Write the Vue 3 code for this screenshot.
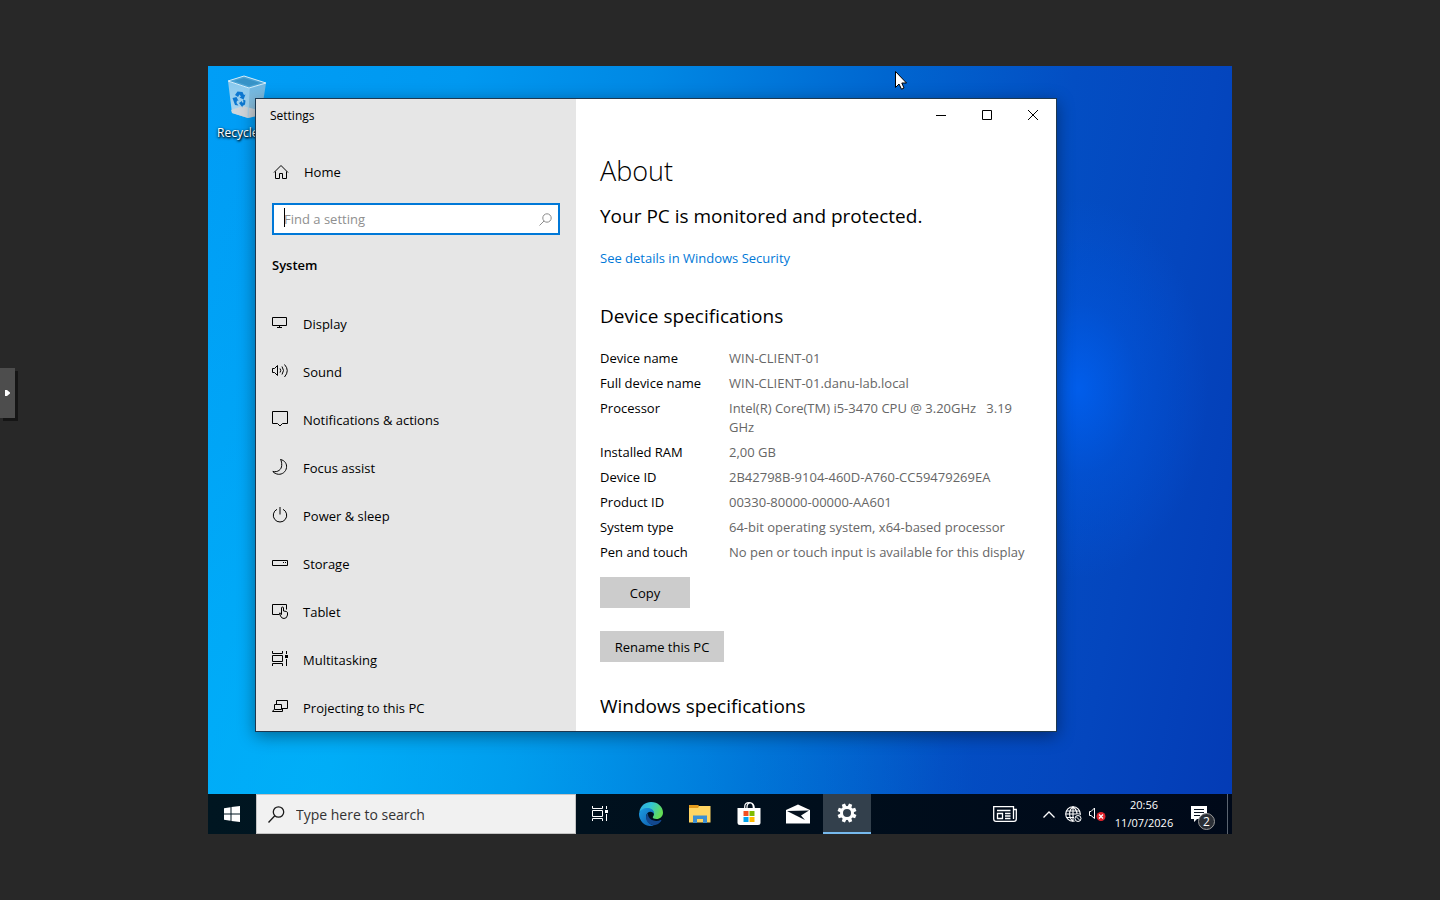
<script setup>
const navItems = [
  { id: 'display', label: 'Display' },
  { id: 'sound', label: 'Sound' },
  { id: 'notifications', label: 'Notifications & actions' },
  { id: 'focus', label: 'Focus assist' },
  { id: 'power', label: 'Power & sleep' },
  { id: 'storage', label: 'Storage' },
  { id: 'tablet', label: 'Tablet' },
  { id: 'multitasking', label: 'Multitasking' },
  { id: 'projecting', label: 'Projecting to this PC' },
]

const specs = [
  ['Device name', 'WIN-CLIENT-01'],
  ['Full device name', 'WIN-CLIENT-01.danu-lab.local'],
  ['Processor', 'Intel(R) Core(TM) i5-3470 CPU @ 3.20GHz \u00a0\u00a03.19 GHz'],
  ['Installed RAM', '2,00 GB'],
  ['Device ID', '2B42798B-9104-460D-A760-CC59479269EA'],
  ['Product ID', '00330-80000-00000-AA601'],
  ['System type', '64-bit operating system, x64-based processor'],
  ['Pen and touch', 'No pen or touch input is available for this display'],
]
</script>

<template>
  <div class="viewer">
    <button class="panel-handle" type="button" aria-label="Open control panel">
      <svg width="5" height="6" viewBox="0 0 5 6"><path d="M0 0h2l3 2.500v1L2 6H0z" fill="#fff" /></svg>
    </button>

    <div class="desktop">
      <div class="workspace">
        <div class="desktop-icon">
          <svg width="40" height="44" viewBox="0 0 40 44">
            <defs>
              <linearGradient id="binL" x1="0" y1="0" x2="0" y2="1">
                <stop offset="0" stop-color="#86c8ee" /><stop offset="1" stop-color="#b4d9ee" />
              </linearGradient>
              <linearGradient id="binR" x1="0" y1="0" x2="0" y2="1">
                <stop offset="0" stop-color="#6db8e4" /><stop offset="1" stop-color="#93c0da" />
              </linearGradient>
            </defs>
            <path d="M1 6L22 13L21 43L5 38z" fill="url(#binL)" />
            <path d="M22 13L39 8L34 40L21 43z" fill="url(#binR)" />
            <path d="M4 35L16 31L34 36L33 40L21 43L5 38z" fill="#d8d6d6" opacity=".8" />
            <path d="M1 6L17 1L39 8L22 13z" fill="#4ba4d6" stroke="#d5edf9" />
            <path d="M7 6L17 3L33 8L22 11z" fill="#2a88bd" opacity=".6" />
            <path d="M22 13L21 43" stroke="#a5d4ee" />
            <g fill="#0d78d1">
              <path d="M8 20L10.500 16.500L15.500 17L17 20L18.500 19.500L16.500 24.500L12.500 22.500L14 21.500L12.500 19.500L11 22z" />
              <path d="M5.500 23L9.500 22L11.500 26L10 25.500L9.500 28L11.500 30.500L8 30z" />
              <path d="M12 28L15 26V27.500L16.500 27.500L16 24.500L18.500 25.500L18 29.500L15.500 31V32.500z" />
            </g>
          </svg>
          <span>Recycle</span>
        </div>

        <main class="window">
          <aside class="sidebar">
            <div class="title">Settings</div>
            <button class="nav-row home" type="button">
              <svg class="ico" viewBox="0 0 16 16"><path d="M1 8.500L8 1.500L15 8.500M2.500 7.500V14.500H6.500V9.500H9.500V14.500H13.500V7.500" /></svg>
              <span>Home</span>
            </button>
            <div class="find">
              <input type="text" aria-label="Find a setting" placeholder="Find a setting" />
              <i class="caret"></i>
              <svg width="13" height="13" viewBox="0 0 13 13"><g fill="none" stroke="#8c8c8c"><circle cx="8" cy="5" r="4.200" /><path d="M5 8L.5 12.500" /></g></svg>
            </div>
            <h2>System</h2>
            <nav>
              <button v-for="item in navItems" :key="item.id" class="nav-row" type="button">
                <svg class="ico" viewBox="0 0 16 16">
                  <path v-if="item.id === 'display'" d="M.5 2.500H14.500V10.500H.5zM7.500 10.500V12.500M5 12.500H10" />
                  <g v-else-if="item.id === 'sound'">
                    <path d="M.5 5.500H2.500L5.500 2.500V12.500L2.500 9.500H.5z" />
                    <path d="M8 5.500Q9.500 7.500 8 9.500M10 3.500Q13 7.500 10 11.500M12.500 1.500Q18 7.500 12.500 14" />
                  </g>
                  <path v-else-if="item.id === 'notifications'" d="M.5 .5H15.500V12.500H10.500L8 15L5.500 12.500H.5z" />
                  <path v-else-if="item.id === 'focus'" d="M8.500 .5C13 1.500 15 5 14.500 8.500C14 13 10 15.500 6.500 15.300C4 15 2 14 .8 12.500C6 13.500 9.500 10.500 9.700 6.500C9.800 4 9.500 2 8.500 .5z" />
                  <path v-else-if="item.id === 'power'" d="M8 0V7.500M5 2.300A6.700 6.700 0 1 0 11 2.300" />
                  <g v-else-if="item.id === 'storage'">
                    <path d="M.5 5.500H15.500V10.500H.5z" /><path d="M11 7.500H12M13 7.500H14" />
                  </g>
                  <g v-else-if="item.id === 'tablet'">
                    <path d="M7.500 11.500H.5V1.500H14.500V6.500" />
                    <path d="M9.500 11.500V5Q9.500 4 10.500 4T11.500 5V8L14.500 8.500Q15.500 9 15.500 10V12Q15 15.500 12 15.500Q9.500 15.500 8.500 13L7.500 10Q8.500 9.500 9.500 11.500" />
                  </g>
                  <g v-else-if="item.id === 'multitasking'">
                    <path d="M.5 0V2.500H10.500V0M.5 4.500H10.500V10.500H.5zM.5 15V12.500H10.500V15M14.500 0V3M14.500 8V15" />
                    <path d="M13 5.500H16" stroke-width="3" />
                  </g>
                  <path v-else d="M4.500 5V1.500H15.500V9.500H10M2.500 10V5.500H9.500V10.500H2.500zM2 10.500L.5 12.500H10.500V10" />
                </svg>
                <span>{{ item.label }}</span>
              </button>
            </nav>
          </aside>

          <section class="content">
            <div class="caption">
              <button type="button" aria-label="Minimize"><svg width="10" height="10" viewBox="0 0 10 10"><path d="M0 5.500H10" /></svg></button>
              <button type="button" aria-label="Maximize"><svg width="10" height="10" viewBox="0 0 10 10"><path d="M.5 .5H9.500V9.500H.5z" /></svg></button>
              <button type="button" aria-label="Close"><svg width="10" height="10" viewBox="0 0 10 10"><path d="M0 0L10 10M10 0L0 10" /></svg></button>
            </div>
            <div class="body">
              <h1>About</h1>
              <h3 class="status">Your PC is monitored and protected.</h3>
              <a href="#">See details in Windows Security</a>
              <h3 class="device">Device specifications</h3>
              <table>
                <tbody>
                  <tr v-for="row in specs" :key="row[0]">
                    <th scope="row">{{ row[0] }}</th>
                    <td>{{ row[1] }}</td>
                  </tr>
                </tbody>
              </table>
              <button class="btn copy" type="button">Copy</button>
              <button class="btn rename" type="button">Rename this PC</button>
              <h3 class="windows">Windows specifications</h3>
            </div>
          </section>
        </main>

        <svg class="pointer" width="12" height="19" viewBox="0 0 12 19"><path d="M.5 .5V16.500L4 13L6.500 18.200L9 17L6.800 12H11.500z" fill="#fff" stroke="#000" /></svg>
      </div>

      <footer class="taskbar">
        <button class="task" type="button" aria-label="Start">
          <svg width="16" height="16" viewBox="0 0 16 16"><path d="M0 2.200L6.500 1.300V7.500H0zM7.500 1.100L16 0V7.500H7.500zM0 8.500H6.500V14.700L0 13.800zM7.500 8.500H16V16L7.500 14.900z" fill="#fff" /></svg>
        </button>
        <label class="search">
          <svg width="17" height="17" viewBox="0 0 17 17"><g fill="none" stroke="#1a1a1a" stroke-width="1.300"><circle cx="10.500" cy="6" r="5.200" /><path d="M6.800 9.700L.5 16.500" /></g></svg>
          <input type="text" aria-label="Search" placeholder="Type here to search" />
        </label>
        <button class="task view" type="button" aria-label="Task View">
          <svg width="16" height="16" viewBox="0 0 16 16"><g fill="none" stroke="#fff"><path d="M.5 0V2.500H10.500V0M.5 4.500H10.500V10.500H.5zM.5 15V12.500H10.500V15M14.500 0V3M14.500 8V15" /><path d="M13 5.500H16" stroke-width="3" /></g></svg>
        </button>
        <button class="task" type="button" aria-label="Edge">
          <svg width="24" height="24" viewBox="0 0 24 24">
            <defs>
              <linearGradient id="eTop" x1="0" y1="0" x2="1" y2=".4">
                <stop offset="0" stop-color="#2aa6e4" /><stop offset=".5" stop-color="#33c5d3" /><stop offset="1" stop-color="#63dd56" />
              </linearGradient>
              <linearGradient id="eLow" x1="0" y1="0" x2="1" y2="1">
                <stop offset="0" stop-color="#1b9de2" /><stop offset="1" stop-color="#0f5cae" />
              </linearGradient>
            </defs>
            <path d="M.3 10C1.500 3.500 6.500 0 12 0C19 0 24 5 24 10.500C24 14.500 21 17 17.500 17C15 17 13.500 16 13.800 15C14.500 14 15 13 15 12C15 9.500 12.500 7 8.500 7C5 7 2 8.500 .3 10z" fill="url(#eTop)" />
            <path d="M.1 11C1 8 4.500 6 8.500 6C13 6 15.500 9 15 12C14.500 10.500 13 9.500 11 9.700C8 10 6.500 13 7.500 16.500C8.500 20 11.500 23 15 23.600C11 25 5 23.500 2.200 19C.5 16.500-.2 14 .1 11z" fill="url(#eLow)" />
            <path d="M9 11C6 14 6.500 19 10.500 21.800C15 24.500 19.500 23 22.500 18.500C22.500 18 22 17.800 21.500 18C17 20 11 18.500 9.500 14.500C9 13.200 8.800 12 9 11z" fill="#12488f" />
          </svg>
        </button>
        <button class="task" type="button" aria-label="File Explorer">
          <svg width="22" height="18" viewBox="0 0 22 18"><path d="M0 0H9L10.500 2H0z" fill="#e39b1d" /><path d="M0 2.500L10 1L21.500 1V17.500H0z" fill="#ffd563" /><path d="M0 0H9L10 1.500L9 3H0z" fill="#e39b1d" /><path d="M4 10.500H18V18H14V14H8V18H4z" fill="#3c8fd3" /></svg>
        </button>
        <button class="task" type="button" aria-label="Store">
          <svg width="24" height="24" viewBox="0 0 24 24"><path d="M.5 6H23.500V20.500Q23.500 23 21 23H3Q.5 23 .5 20.500z" fill="#fff" /><path d="M7.700 7V5Q7.700 .6 12 .6T16.300 5V7M10 7V5Q10 1 13.500 1T17.300 6" fill="none" stroke="#fff" stroke-width="1.200" /><path d="M6.500 9H11.500V14H6.500z" fill="#f25022" /><path d="M12.500 9H17.500V14H12.500z" fill="#7fba00" /><path d="M6.500 15H11.500V20H6.500z" fill="#00a4ef" /><path d="M12.500 15H17.500V20H12.500z" fill="#ffb900" /></svg>
        </button>
        <button class="task" type="button" aria-label="Mail">
          <svg width="24" height="20" viewBox="0 0 24 20"><path d="M0 6L12 .5L24 6V19.500H0z" fill="#fff" /><path d="M1 7L23 6.500L15 11.500L19 16L10 11.500z" fill="#06131f" /></svg>
        </button>
        <button class="task active" type="button" aria-label="Settings">
          <svg width="20" height="20" viewBox="-10 -10 20 20"><g fill="#fff"><path v-for="n in 8" :key="n" d="M-2 -6L-1.700 -9.500H1.700L2 -6z" :transform="`rotate(${n * 45 - 22.5})`" /></g><circle r="5.500" fill="none" stroke="#fff" stroke-width="3" /></svg>
        </button>

        <div class="tray">
          <button class="task news" type="button" aria-label="News and interests">
            <svg width="24" height="16" viewBox="0 0 24 16"><g fill="none" stroke="#fff" stroke-width="1.300"><path d="M20.500 3.500H23.300V13Q23.300 15.300 21 15.300H3Q.7 15.300 .7 13V.7H20.500V13M4.500 7.500H9.500V12.500H4.500zM4 4.500H17.500M12 7.500H17.500M12 10H17.500M12 12.500H17.500" /></g></svg>
          </button>
          <button class="small" type="button" aria-label="Show hidden icons">
            <svg width="12" height="7" viewBox="0 0 12 7"><path d="M.5 6.500L6 1L11.500 6.500" fill="none" stroke="#fff" stroke-width="1.300" /></svg>
          </button>
          <button class="small" type="button" aria-label="Network">
            <svg width="17" height="17" viewBox="0 0 17 17"><g fill="none" stroke="#fff" stroke-width="1.100"><circle cx="8" cy="8" r="7.300" /><path d="M8 .7V15.300M1.500 5H14.500M.7 8H15.300M1.500 11.500H9M8 .7C3.500 4 3.500 12 8 15.300M8 .7C11 3 12 5 12 8" /></g><circle cx="13" cy="12.500" r="4" fill="#020e1d" /><circle cx="13" cy="12.500" r="3" fill="none" stroke="#fff" /><path d="M11 10.500L15 14.500" stroke="#fff" /></svg>
          </button>
          <button class="small" type="button" aria-label="Volume">
            <svg width="17" height="14" viewBox="0 0 17 14"><path d="M.5 4.500H2L5.500 1V11.500L2 8.500H.5z" fill="none" stroke="#fff" /><circle cx="12" cy="9.500" r="4.500" fill="#e0242c" /><path d="M10 7.500L14 11.500M14 7.500L10 11.500" stroke="#fff" stroke-width="1.200" /></svg>
          </button>
          <div class="clock"><span>20:56</span><span>11/07/2026</span></div>
          <button class="task action" type="button" aria-label="Notifications">
            <svg width="16" height="16" viewBox="0 0 16 16"><path d="M0 0H16V13H6L3 16V13H0z" fill="#fff" /><path d="M3 3.500H13M3 6.500H13M3 9.500H9" stroke="#06101d" /></svg>
            <span class="badge">2</span>
          </button>
          <button class="peek" type="button" aria-label="Show desktop"></button>
        </div>
      </footer>
    </div>
  </div>
</template>

<style>
body { margin: 0; background: #282828; }
</style>

<style scoped>
* { box-sizing: border-box; }
.viewer {
  position: relative;
  min-height: 100vh;
  padding: 66px 208px;
  display: flex;
  background: #282828;
  font-family: "Open Sans", "Noto Sans", sans-serif;
  font-size: 13px;
  color: #000;
}
button { border: 0; padding: 0; background: none; font: inherit; color: inherit; }
h1, h2, h3 { margin: 0; font-weight: 400; }
svg { flex: none; display: block; }

.panel-handle {
  position: absolute;
  left: 0;
  top: 368px;
  width: 15px;
  height: 50px;
  display: flex;
  align-items: center;
  padding-left: 5px;
  background: #4d4d4d;
  box-shadow: 3px 3px 0 #151515;
}

.desktop {
  flex: 1;
  min-width: 0;
  display: flex;
  flex-direction: column;
  background:
    radial-gradient(ellipse 130px 190px at 85% 42%, rgba(0, 98, 245, .8), rgba(0, 90, 230, .4) 45%, rgba(0, 80, 220, 0) 100%),
    linear-gradient(101deg, #009ef6 0%, #0098f0 22%, #0088e4 38%, #0066d0 58%, #034ec3 74%, #0446be 86%, #043bb5 100%);
}
.workspace {
  position: relative;
  flex: 1;
  overflow: hidden;
  background: radial-gradient(ellipse 65% 90% at 10% 100%, rgba(0, 196, 255, .5), rgba(0, 190, 255, 0));
}
.desktop-icon {
  position: absolute;
  left: 9px;
  top: 9px;
  display: flex;
  flex-direction: column;
  align-items: flex-start;
  gap: 6px;
  color: #fff;
  font-size: 12px;
  line-height: 16px;
  text-shadow: 1px 1px 2px #000, 0 1px 3px #000;
}
.desktop-icon svg { margin-left: 10px; }

.window {
  position: absolute;
  left: 47px;
  right: 175px;
  top: 32px;
  bottom: 62px;
  display: flex;
  overflow: hidden;
  border: 1px solid #1d3850;
  background: #fff;
  box-shadow: 0 4px 16px rgba(0, 0, 0, .4);
}
.sidebar { width: 320px; flex: none; background: #e6e6e6; }
.title { padding: 8px 14px 0; height: 32px; font-size: 12px; line-height: 18px; }
.nav-row {
  display: flex;
  align-items: center;
  width: 100%;
  height: 48px;
  padding-left: 16px;
  gap: 15px;
  text-align: left;
}
.home { margin-top: 17px; padding-left: 17px; }
.ico { width: 16px; height: 16px; fill: none; stroke: #000; }
nav .ico { margin-bottom: 2px; }
.find {
  position: relative;
  display: flex;
  align-items: center;
  height: 32px;
  margin: 7px 16px 0;
  padding: 0 6px 0 10px;
  border: 2px solid #0078d7;
  background: #fff;
}
.find input, .search input {
  flex: 1;
  min-width: 0;
  padding: 0;
  border: 0;
  outline: 0;
  background: none;
  font-family: inherit;
}
.find input { font-size: 13px; }
.find input::placeholder { color: #8f8f8f; opacity: 1; }
.find .caret { position: absolute; left: 10px; top: 3px; width: 1px; height: 19px; background: #000; }
h2 { margin: 20px 16px 0; font-size: 13px; line-height: 20px; font-weight: 600; }
nav { margin-top: 25px; }

.content { flex: 1; min-width: 0; display: flex; flex-direction: column; }
.caption { display: flex; justify-content: flex-end; height: 32px; }
.caption button { width: 46px; display: flex; align-items: center; justify-content: center; }
.caption svg { fill: none; stroke: #000; }
.body { display: flex; flex-direction: column; align-items: flex-start; padding: 22px 20px 0 24px; }
h1 { font-size: 27px; line-height: 36px; font-weight: 300; }
h3 { font-size: 19px; line-height: 28px; }
.status { margin-top: 13px; }
.body a { margin-top: 18px; line-height: 20px; color: #0078d7; text-decoration: none; }
.device { margin-top: 34px; }
table { margin-top: 16px; border-collapse: collapse; width: 100%; }
th, td { padding: 3px 0; line-height: 19px; font-weight: 400; text-align: left; vertical-align: top; }
th { width: 129px; }
td { color: #666; }
.btn { height: 31px; padding: 0 14px; background: #ccc; }
.copy { margin-top: 12px; min-width: 90px; }
.rename { margin-top: 23px; min-width: 124px; }
.windows { margin-top: 30px; }

.pointer { position: absolute; left: 687px; top: 5px; }

.taskbar { display: flex; height: 40px; background: linear-gradient(90deg, #001621, #000e1c 60%, #000919); }
.task { position: relative; display: flex; align-items: center; justify-content: center; width: 48px; margin-right: 1px; color: #fff; }
.task:first-child { margin-right: 0; }
.search {
  display: flex;
  align-items: center;
  width: 320px;
  padding-left: 11px;
  gap: 11px;
  border: 1px solid #c4c4c4;
  background: #f1f1f1;
}
.search input { font-size: 14px; }
.search input::placeholder { color: #333; opacity: 1; }
.task.view { margin-right: 3px; }
.active { background: #33404c; border-bottom: 2px solid #76b9ed; }
.tray { display: flex; margin-left: auto; color: #fff; }
.tray .news { margin-right: 8px; }
.small { width: 24px; display: flex; align-items: center; justify-content: center; }
.clock { width: 70px; display: flex; flex-direction: column; align-items: center; padding-top: 2px; font-size: 11px; line-height: 18px; }
.tray .action { margin-right: 0; padding-right: 8px; }
.badge {
  position: absolute;
  right: 12px;
  bottom: 4px;
  width: 17px;
  height: 17px;
  border: 1px solid #9a9a9a;
  border-radius: 50%;
  background: #2b2f36;
  font-size: 12px;
  line-height: 15px;
  text-align: center;
}
.peek { width: 5px; border-left: 1px solid #5b6470; }
</style>
